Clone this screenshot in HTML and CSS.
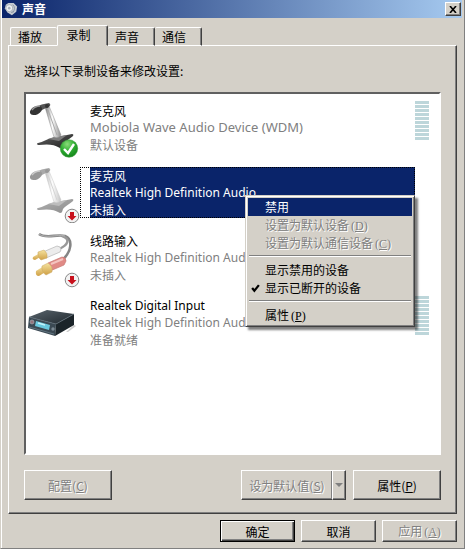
FILE: index.html
```html
<!DOCTYPE html>
<html lang="zh-CN">
<head>
<meta charset="utf-8">
<title>声音</title>
<meta name="viewport" content="width=device-width, initial-scale=1">
<link rel="stylesheet" href="styles.css">
</head>
<body>
<svg class="defs" aria-hidden="true">
  <defs>
    <linearGradient id="stalk" x1="0" y1="0" x2="1" y2="0"><stop offset="0" stop-color="#777"/><stop offset=".45" stop-color="#fff"/><stop offset="1" stop-color="#8a8a8a"/></linearGradient>
    <linearGradient id="base" x1="0" y1="0" x2="1" y2="1"><stop offset="0" stop-color="#666"/><stop offset="1" stop-color="#1c1c1c"/></linearGradient>
    <radialGradient id="green" cx=".4" cy=".25" r=".8"><stop offset="0" stop-color="#8bdc7a"/><stop offset=".5" stop-color="#2fae32"/><stop offset="1" stop-color="#118218"/></radialGradient>
    <linearGradient id="gold" x1="0" y1="0" x2="0" y2="1"><stop offset="0" stop-color="#f6e3a0"/><stop offset="1" stop-color="#cfa046"/></linearGradient>
    <linearGradient id="boxtop" x1="0" y1="0" x2="1" y2="1"><stop offset="0" stop-color="#59646c"/><stop offset="1" stop-color="#20282e"/></linearGradient>
    <symbol id="mic" viewBox="0 0 54 56">
      <path d="M12 41c5-1 9-4 14-5l20-4q2 0 1 2c-3 3-8 5-10 8-1 3-1 4-3 4-6-4-13-4-21-3-2 0-3-1-1-2z" fill="url(#base)"/>
      <path d="M28 35l13-2-8 6-11-2z" fill="#7d7d7d"/>
      <path d="M19 5l4-1 12 29q-2 4-7 2z" fill="url(#stalk)" stroke="#8d8d8d" stroke-width=".5"/>
      <path d="M22 8l9 25" stroke="#aaa" stroke-width="1" fill="none"/>
      <path d="M10 5q5-3 13-4 2 1 1 3L12 10z" fill="#555"/>
      <ellipse cx="10" cy="8.500" rx="6.500" ry="4" transform="rotate(-25 10 8.500)" fill="#333"/>
      <path d="M6 8q3-4 8-4" stroke="#999" stroke-width="1.500" fill="none"/>
      <circle cx="21" cy="4" r="2" fill="#333"/>
    </symbol>
    <symbol id="unplugged" viewBox="0 0 16 16">
      <circle cx="8" cy="8" r="6.800" fill="#f2f2f2" stroke="#888" stroke-width="1"/>
      <path d="M6 4h4v4h2.500L8 12.500 3.500 8H6z" fill="#c8101c"/>
    </symbol>
  </defs>
</svg>
<div class="window">
  <header class="titlebar">
    <svg class="app-icon" viewBox="0 0 16 16" aria-hidden="true">
      <path d="M5 1l6 0 4 4-1 6-5 4-5-3L1 7l1-4z" fill="#c5cbd2"/>
      <circle cx="6" cy="7" r="4" fill="#eef0f3" stroke="#a4abb4"/>
      <circle cx="6" cy="7" r="1.500" fill="#a9b1bb"/>
      <path d="M10 3q4 4 0 9M8 12l3-1" stroke="#8590a0" fill="none"/>
    </svg>
    <h1>声音</h1>
    <button class="close" type="button" aria-label="关闭"><svg viewBox="0 0 8 7" aria-hidden="true"><path d="M1 0l6 7M7 0L1 7" stroke="#000" stroke-width="1.600"/></svg></button>
  </header>

  <nav class="tabs" role="tablist">
    <button class="tab" type="button" role="tab" aria-selected="false">播放</button>
    <button class="tab selected" type="button" role="tab" aria-selected="true">录制</button>
    <button class="tab" type="button" role="tab" aria-selected="false">声音</button>
    <button class="tab" type="button" role="tab" aria-selected="false">通信</button>
  </nav>

  <main class="panel" role="tabpanel">
    <p class="prompt" id="prompt">选择以下录制设备来修改设置:</p>
    <ul class="devices" aria-labelledby="prompt">
      <li class="device">
        <svg class="device-icon" viewBox="0 0 54 56" aria-hidden="true">
          <use href="#mic" width="54" height="56"/>
          <circle cx="43" cy="46.500" r="8.700" fill="url(#green)" stroke="#3c9c3c" stroke-width=".6"/>
          <path d="M38 47l4 4 6-9" fill="none" stroke="#fff" stroke-width="2.400"/>
        </svg>
        <div class="info"><span class="name">麦克风</span><span class="latin wide">Mobiola Wave Audio Device (WDM)</span><span>默认设备</span></div>
        <div class="meter"></div>
      </li>
      <li class="device chosen">
        <svg class="device-icon" viewBox="0 0 54 56" aria-hidden="true">
          <use href="#mic" width="54" height="56" opacity=".5"/>
          <use href="#unplugged" x="38" y="41" width="16" height="16"/>
        </svg>
        <div class="info"><span class="name">麦克风</span><span class="latin">Realtek High Definition Audio</span><span>未插入</span></div>
        <div class="menu" role="menu">
          <button type="button" role="menuitem" class="active">禁用</button>
          <button type="button" role="menuitem" disabled>设置为默认设备<span class="key">(<u>D</u>)</span></button>
          <button type="button" role="menuitem" disabled>设置为默认通信设备<span class="key">(<u>C</u>)</span></button>
          <hr>
          <button type="button" role="menuitemcheckbox" aria-checked="false">显示禁用的设备</button>
          <button type="button" role="menuitemcheckbox" aria-checked="true"><svg class="tick" viewBox="0 0 8 8" aria-hidden="true"><path d="M1 3.500l2 2.500 4-5" fill="none" stroke="#000" stroke-width="2"/></svg>显示已断开的设备</button>
          <hr>
          <button type="button" role="menuitem">属性<span class="key">(<u>P</u>)</span></button>
        </div>
      </li>
      <li class="device">
        <svg class="device-icon" viewBox="0 0 54 56" aria-hidden="true">
          <path d="M13 2c6 5 18 0 26 2 8 3 7 16-3 24" fill="none" stroke="#858585" stroke-width="2.600"/>
          <path d="M36 4c9 3 6 9-3 13" fill="none" stroke="#999" stroke-width="2.400"/>
          <path d="M13 2c6 5 18 0 26 2" fill="none" stroke="#bbb" stroke-width=".8"/>
          <path d="M17 20l14-6q4 0 4 4l-1 2-14 6z" fill="#ececec" stroke="#b5b5b5" stroke-width=".7"/>
          <path d="M7 25l7-4 2 3-7 4q-3 0-2-3z" fill="url(#gold)"/>
          <path d="M12 20l6-2q4 3 3 8l-6 2q-4-3-3-8z" fill="url(#gold)" stroke="#c9a867" stroke-width=".5"/>
          <path d="M22 31l14-6q4 0 4 4l-2 4-14 6z" fill="#e08a86" stroke="#c87874" stroke-width=".7"/>
          <path d="M25 32l12-5" stroke="#f4c4c0" stroke-width="2"/>
          <path d="M10 39l8-5 3 5-8 5q-4 0-3-5z" fill="url(#gold)"/>
          <path d="M16 34l6-3q5 3 4 9l-6 3q-5-3-4-9z" fill="url(#gold)" stroke="#c9a867" stroke-width=".5"/>
          <use href="#unplugged" x="38" y="40" width="16" height="16"/>
        </svg>
        <div class="info"><span class="name">线路输入</span><span class="latin">Realtek High Definition Audio</span><span>未插入</span></div>
      </li>
      <li class="device">
        <svg class="device-icon" viewBox="0 0 54 56" aria-hidden="true">
          <path d="M40 35l8-7 2 1-8 6z" fill="#ccc"/>
          <path d="M3 20l18-7 27 4-18 10z" fill="url(#boxtop)"/>
          <path d="M3 20l27 7-1 12-27-8z" fill="#3b4953"/>
          <path d="M30 27l18-10v11L29 39z" fill="#1b2429"/>
          <path d="M3 20l27 7 18-10" fill="none" stroke="#5d6c76" stroke-width=".8"/>
          <path d="M10 24l14 4-1 5-14-4z" fill="#69c9df"/>
          <path d="M12 26l7 2" stroke="#c5f3fb" stroke-width="1.500"/>
          <circle cx="6" cy="25" r="2" fill="#96747d" stroke="#a9b5bd" stroke-width=".6"/>
          <circle cx="27" cy="32" r="1.700" fill="#7b8993"/>
          <path d="M3 30l25 7" stroke="#60747f" stroke-width="1"/>
        </svg>
        <div class="info"><span class="name latin">Realtek Digital Input</span><span class="latin">Realtek High Definition Audio</span><span>准备就绪</span></div>
        <div class="meter"></div>
      </li>
    </ul>
    <div class="actions">
      <button class="button large" type="button" disabled>配置(<u>C</u>)</button>
      <div class="split">
        <button class="button main-part" type="button" disabled>设为默认值(<u>S</u>)</button>
        <button class="button drop-part" type="button" disabled aria-label="更多默认值选项"><span class="arrow"></span></button>
      </div>
      <button class="button large" type="button">属性(<u>P</u>)</button>
    </div>
  </main>

  <footer class="footer">
    <button class="button default" type="button">确定</button>
    <button class="button" type="button">取消</button>
    <button class="button" type="button" disabled>应用<span class="key">(<u>A</u>)</span></button>
  </footer>
</div>
</body>
</html>
```

FILE: styles.css
```css
* { box-sizing: border-box; }

body {
  margin: 0;
  background: #d4d0c8;
  color: #000;
  font: 12px/17px "Noto Sans CJK SC", sans-serif;
}

button {
  margin: 0;
  padding: 0;
  border: 0;
  background: #d4d0c8;
  color: #000;
  font: inherit;
}

.defs { position: absolute; width: 0; height: 0; }

.window {
  display: flex;
  flex-direction: column;
  min-height: 100vh;
  border: 1px solid #808080;
  border-top: 0;
  border-left-color: #d4d0c8;
  box-shadow: inset 1px 0 #fff;
}

.titlebar {
  display: flex;
  align-items: center;
  height: 18px;
  margin: 0 2px 0 1px;
  padding: 0 1px 0 2px;
  background: linear-gradient(90deg, #0a246a, #a6caf0);
}

.app-icon { width: 14px; height: 14px; margin-right: 4px; }

.titlebar h1 {
  flex: 1;
  margin: 0;
  color: #fff;
  font-size: 12px;
  font-weight: 700;
  line-height: 18px;
}

.close {
  display: grid;
  place-items: center;
  width: 16px;
  height: 14px;
  border: 1px solid;
  border-color: #fff #404040 #404040 #fff;
  box-shadow: inset -1px -1px #808080;
}

.close svg { width: 8px; height: 7px; }

.tabs {
  position: relative;
  z-index: 1;
  display: flex;
  align-items: flex-end;
  height: 28px;
  padding-left: 9px;
}

.tab {
  width: 47px;
  height: 19px;
  padding-right: 8px;
  border: 1px solid #fff;
  border-right-color: #404040;
  border-radius: 2px 2px 0 0;
  box-shadow: inset -1px 0 #808080;
}

.tab:first-child { border-right: 0; box-shadow: none; }
.tab:not(:first-child):not(.selected) { border-left: 0; }

.tab.selected {
  width: 51px;
  height: 21px;
  padding: 0 14px 4px 6px;
  border-bottom-color: #d4d0c8;
}

.panel {
  display: flex;
  flex: 1;
  flex-direction: column;
  margin: -1px 7px 0 7px;
  padding: 16px 15px 13px;
  border: 1px solid;
  border-color: #fff #404040 #404040 #fff;
  box-shadow: inset -1px -1px #808080;
}

.prompt { margin: 0 0 13px; }

.devices {
  display: flex;
  flex: 1;
  flex-direction: column;
  gap: 14px;
  margin: 0;
  padding: 8px 0;
  border: 2px solid;
  border-color: #606060 #fff #fff #606060;
  background: #fff;
  list-style: none;
}

.device {
  position: relative;
  display: grid;
  grid-template-columns: 54px 1fr 24px;
  grid-template-rows: 51px;
}

.device-icon { width: 54px; height: 56px; }

.info {
  display: flex;
  flex-direction: column;
  padding-left: 10px;
  color: #808080;
  white-space: nowrap;
}

.name { color: #000; }
.latin { font-family: "Noto Sans", "Noto Sans CJK SC", sans-serif; }
.wide { font-size: 13px; }

.chosen .info {
  outline: 1px dotted #000;
  outline-offset: -1px;
  background: linear-gradient(90deg, #fff 10px, #0a246a 10px);
}

.chosen .info span { color: #fff; }

.meter {
  width: 14px;
  height: 39px;
  margin-top: -1px;
  background: repeating-linear-gradient(#bdd6da 0 3px, #fff 3px 4px);
}

.menu {
  position: absolute;
  z-index: 2;
  top: 28px;
  left: 219px;
  width: 170px;
  padding: 2px;
  border: 1px solid;
  border-color: #d4d0c8 #404040 #404040 #d4d0c8;
  background: #d4d0c8;
  box-shadow: inset 1px 1px #fff, inset -1px -1px #808080, 3px 3px 2px rgba(0, 0, 0, .5);
}

.menu button {
  position: relative;
  display: block;
  width: 100%;
  height: 18px;
  padding-left: 17px;
  background: none;
  line-height: 18px;
  text-align: left;
  white-space: nowrap;
}

.menu .active { background: #0a246a; color: #fff; }

.menu hr {
  height: 2px;
  margin: 3px 1px 4px;
  border: 0;
  border-top: 1px solid #808080;
  border-bottom: 1px solid #fff;
}

.tick { position: absolute; top: 5px; left: 3px; width: 9px; height: 9px; }

.key { padding-left: 2px; font-family: "Liberation Serif", serif; }

button:disabled { color: #808080; text-shadow: 1px 1px #fff; }

.actions { display: flex; gap: 7px; margin-top: 15px; }

.button {
  width: 75px;
  height: 22px;
  border: 1px solid;
  border-color: #fff #404040 #404040 #fff;
  box-shadow: inset -1px -1px #808080;
  line-height: 17px;
  white-space: nowrap;
}

.button.large { width: 88px; height: 30px; }
.split { display: flex; margin-left: auto; }
.split .button { height: 30px; }
.split .main-part { width: 91px; border-right: 0; }
.split .drop-part { display: grid; place-items: center; width: 14px; }

.arrow {
  border: 4px solid transparent;
  border-top-color: #808080;
  border-bottom: 0;
}

.button.default {
  border-color: #000;
  box-shadow: inset 1px 1px #fff, inset -1px -1px #404040, inset -2px -2px #808080;
}

.footer {
  display: flex;
  justify-content: flex-end;
  gap: 6px;
  padding: 6px 7px;
}
```
